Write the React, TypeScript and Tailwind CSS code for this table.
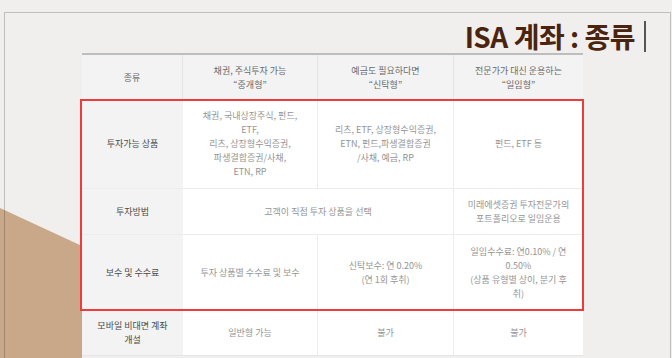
import React from "react";

type Cell = { lines: string[]; span?: number };

const rows: { label: string[]; cells: Cell[]; h: string }[] = [
  {
    label: ["투자가능 상품"],
    h: "h-[89px]",
    cells: [
      {
        lines: [
          "채권, 국내상장주식, 펀드,",
          "ETF,",
          "리츠, 상장형수익증권,",
          "파생결합증권/사채,",
          "ETN, RP",
        ],
      },
      { lines: ["리츠, ETF, 상장형수익증권,", "ETN, 펀드,파생결합증권", "/사채, 예금, RP"] },
      { lines: ["펀드, ETF 등"] },
    ],
  },
  {
    label: ["투자방법"],
    h: "h-[46px]",
    cells: [
      { lines: ["고객이 직접 투자 상품을 선택"], span: 2 },
      { lines: ["미래에셋증권 투자전문가의", "포트폴리오로 일임운용"] },
    ],
  },
  {
    label: ["보수 및 수수료"],
    h: "h-[75px]",
    cells: [
      { lines: ["투자 상품별 수수료 및 보수"] },
      { lines: ["신탁보수: 연 0.20%", "(연 1회 후취)"] },
      { lines: ["일임수수료: 연0.10% / 연", "0.50%", "(상품 유형별 상이, 분기 후", "취)"] },
    ],
  },
];

const font = { fontFamily: '"Noto Sans CJK KR", "Noto Sans", sans-serif' };

function Lines({ lines }: { lines: string[] }) {
  return (
    <div className="text-center leading-[14px]">
      {lines.map((l, i) => (
        <div key={i}>{l}</div>
      ))}
    </div>
  );
}

const cols = "grid grid-cols-[101px_135px_136px_129px]";

export default function App() {
  return (
    <div
      className="relative w-[672px] h-[358px] overflow-hidden bg-[#f0efed]"
      style={font}
    >
      {/* brown background shape */}
      <svg className="absolute left-0 top-0" width="672" height="358">
        <polygon points="0,208 82,246 82,358 0,358" fill="#c9a88a" />
      </svg>

      <div className="relative ml-[4px] mr-[1px] mt-[12px] h-[400px] border border-black/20">
        {/* title */}
        <div className="flex justify-end items-center pt-[8px] pr-[24px]">
          <h1 className="text-[28px] leading-[31px] font-bold text-[#4b2410] tracking-[-0.5px]">
            ISA 계좌 : 종류
          </h1>
          <div className="ml-[9px] w-[2px] h-[31px] bg-[#555]" />
        </div>

        {/* table */}
        <div className="ml-[77px] mt-[1px] w-[501px] border-t-2 border-[#bdbdbd] text-[9px] text-[#949494]">
          <div className={`${cols} h-[45px] bg-[#f3f3f3] text-[#6a6a6a]`}>
            <div className="flex items-center justify-center border-r border-[#e6e6e6]">
              <Lines lines={["종류"]} />
            </div>
            <div className="flex items-center justify-center border-r border-[#e6e6e6]">
              <Lines lines={["채권, 주식투자 가능", "“중개형”"]} />
            </div>
            <div className="flex items-center justify-center border-r border-[#e6e6e6]">
              <Lines lines={["예금도 필요하다면", "“신탁형”"]} />
            </div>
            <div className="flex items-center justify-center">
              <Lines lines={["전문가가 대신 운용하는", "“일임형”"]} />
            </div>
          </div>

          <div className="relative">
            {rows.map((r, ri) => (
              <div
                key={ri}
                className={`${cols} ${r.h} ${ri < rows.length - 1 ? "border-b border-[#ececec]" : ""}`}
              >
                <div className="flex items-center justify-center bg-[#f3f3f3] text-[#4a4a4a]">
                  <Lines lines={r.label} />
                </div>
                {r.cells.map((c, ci) => (
                  <div
                    key={ci}
                    className={`flex items-center justify-center bg-white ${c.span === 2 ? "col-span-2" : ""} ${ci < r.cells.length - 1 ? "border-r border-[#ececec]" : ""}`}
                  >
                    <Lines lines={c.lines} />
                  </div>
                ))}
              </div>
            ))}
            <div className="absolute -left-[2px] -right-[1px] -top-[1px] -bottom-[1px] border-2 border-[#ee3b3b] pointer-events-none" />
          </div>

          <div className={`${cols} h-[46px] border-b border-[#e6e6e6]`}>
            <div className="flex items-center justify-center bg-[#f3f3f3] text-[#4a4a4a]">
              <Lines lines={["모바일 비대면 계좌", "개설"]} />
            </div>
            <div className="flex items-center justify-center bg-white border-r border-[#ececec]">
              <Lines lines={["일반형 가능"]} />
            </div>
            <div className="flex items-center justify-center bg-white border-r border-[#ececec]">
              <Lines lines={["불가"]} />
            </div>
            <div className="flex items-center justify-center bg-white">
              <Lines lines={["불가"]} />
            </div>
          </div>
        </div>
      </div>
    </div>
  );
}
